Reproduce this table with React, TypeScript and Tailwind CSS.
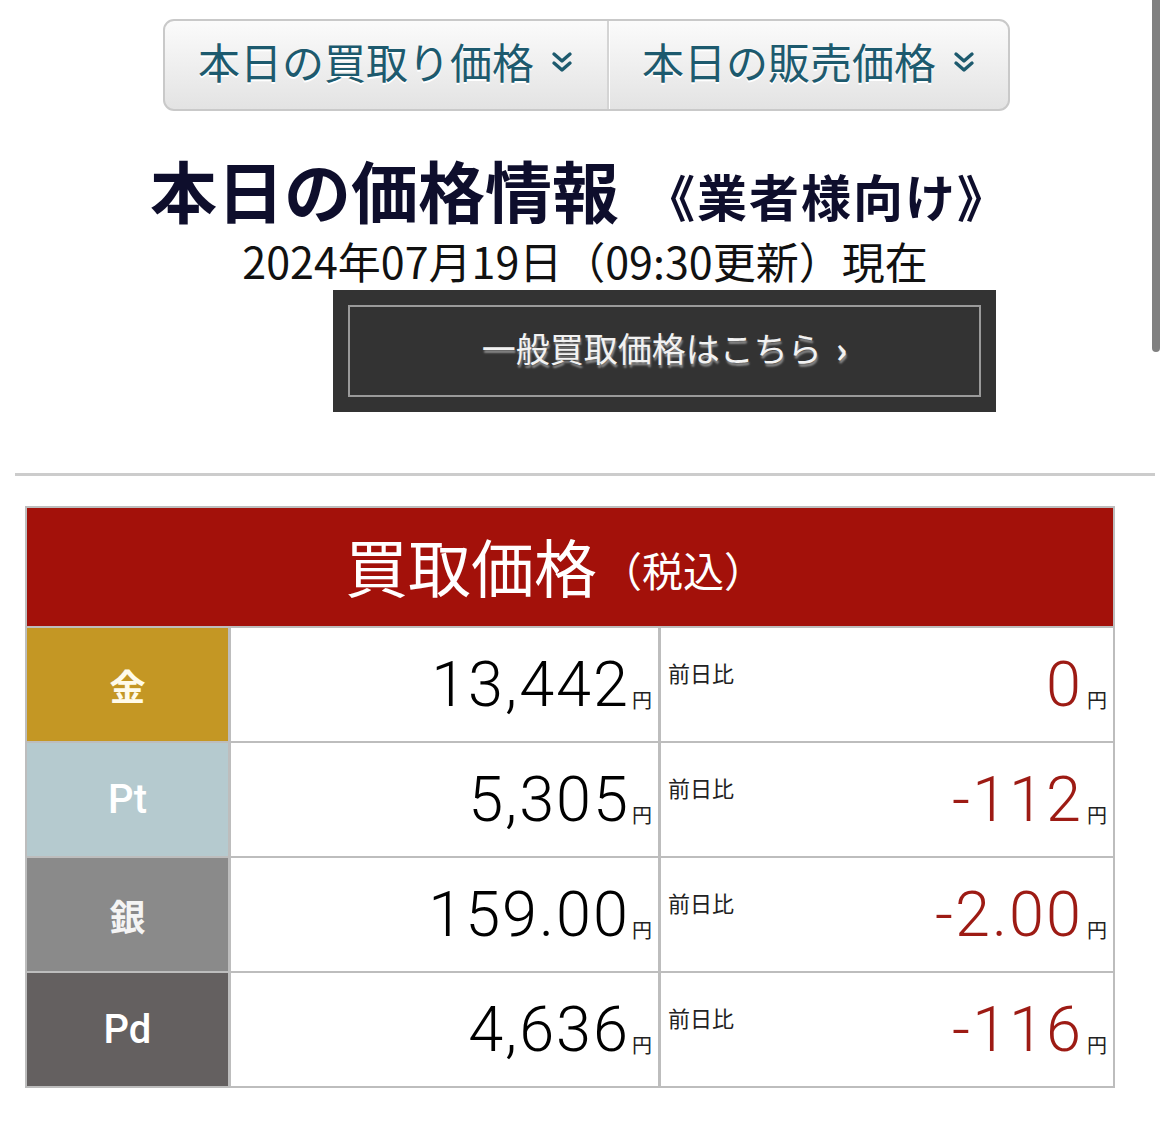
import React from "react";

function DoubleChevron() {
  return (
    <svg width="24" height="24" viewBox="0 0 24 24" className="ml-[16px] mt-[2px]">
      <path d="M4 4 L12 11 L20 4" fill="none" stroke="#1d5a6e" strokeWidth="3.4" strokeLinecap="round" strokeLinejoin="round" />
      <path d="M4 13 L12 20 L20 13" fill="none" stroke="#1d5a6e" strokeWidth="3.4" strokeLinecap="round" strokeLinejoin="round" />
    </svg>
  );
}

type Row = { label: string; bg: string; labelCls: string; value: string; change: string };

const rows: Row[] = [
  { label: "金", bg: "bg-[#c49724]", labelCls: "text-[36px] font-bold text-[#fffbea]", value: "13,442", change: "0" },
  { label: "Pt", bg: "bg-[#b5cacf]", labelCls: "text-[40px] font-['Roboto',sans-serif] font-medium text-white", value: "5,305", change: "-112" },
  { label: "銀", bg: "bg-[#8a8a8a]", labelCls: "text-[36px] font-bold text-[#f4f4f4]", value: "159.00", change: "-2.00" },
  { label: "Pd", bg: "bg-[#646060]", labelCls: "text-[40px] font-['Roboto',sans-serif] font-medium text-white", value: "4,636", change: "-116" },
];

export default function App() {
  return (
    <div className="relative w-[1170px] h-[1141px] bg-white overflow-hidden font-['Noto_Sans_CJK_JP','Noto_Sans',sans-serif]">
      {/* tabs */}
      <div className="pt-[19px]">
        <div className="ml-[163px] w-[847px] h-[92px] rounded-[11px] border-2 border-[#c9c9c9] bg-gradient-to-b from-[#fbfbfb] to-[#e3e3e3] flex overflow-hidden">
          <div className="w-[442px] pb-[8px] flex items-center justify-center text-[42px] leading-none text-[#1d5a6e] [text-shadow:0_2px_0_#ffffff]">
            <span>本日の買取り価格</span>
            <DoubleChevron />
          </div>
          <div className="w-[3px] bg-[#d4d4d4] border-r border-white" />
          <div className="flex-1 pb-[8px] flex items-center justify-center text-[42px] leading-none text-[#1d5a6e] [text-shadow:0_2px_0_#ffffff]">
            <span>本日の販売価格</span>
            <DoubleChevron />
          </div>
        </div>
      </div>

      {/* title */}
      <div className="mt-[44px] ml-[150px] flex items-end text-[#0e0e2c] font-bold leading-none">
        <span className="text-[67px]">本日の価格情報</span>
        <span className="ml-[26px] text-[50px] tracking-[2px] mb-[2px]">《業者様向け》</span>
      </div>

      {/* date */}
      <div className="mt-[17px] text-center text-[43px] leading-none text-[#111]">
        2024年07月19日（09:30更新）現在
      </div>

      {/* dark button */}
      <div className="mt-[8px] ml-[333px] w-[663px] h-[122px] bg-[#333333] p-[15px]">
        <div className="w-full h-full pb-[8px] border-2 border-[#9a9a9a] flex items-center justify-center text-[34px] text-[#f2f2f2] [text-shadow:1px_3px_2px_#8a8a8a]">
          一般買取価格はこちら<span className="ml-[14px] text-[36px] font-bold">›</span>
        </div>
      </div>

      {/* divider */}
      <div className="mt-[61px] ml-[15px] w-[1140px] h-[3px] bg-[#cccccc]" />

      {/* table */}
      <div className="mt-[30px] ml-[25px] w-[1090px] bg-[#bdbdbd] p-[2px] flex flex-col gap-[2px]">
        <div className="h-[118px] bg-[#a3110a] pb-[6px] flex items-center justify-center text-white pr-[30px]">
          <span className="text-[63px] leading-none">買取価格</span>
          <span className="ml-[4px] mt-[10px] text-[41px] leading-none">（税込）</span>
        </div>
        {rows.map((r) => (
          <div key={r.label} className="h-[113px] flex gap-[3px]">
            <div className={`w-[201px] flex items-center justify-center ${r.bg}`}>
              <span className={`leading-none ${r.labelCls}`}>{r.label}</span>
            </div>
            <div className="w-[427px] bg-white flex items-center justify-end pr-[6px]">
              <span className="font-['Roboto',sans-serif] font-light text-[63px] leading-none tracking-[2px] text-black">{r.value}</span>
              <span className="mt-[30px] ml-[2px] text-[20px] leading-none text-[#222]">円</span>
            </div>
            <div className="flex-1 bg-white flex items-center pr-[6px]">
              <span className="self-start mt-[33px] ml-[7px] text-[22px] leading-none text-[#222]">前日比</span>
              <div className="flex-1 flex items-center justify-end">
                <span className="font-['Roboto',sans-serif] font-light text-[63px] leading-none tracking-[2px] text-[#9d1b14]">{r.change}</span>
                <span className="mt-[30px] ml-[4px] text-[20px] leading-none text-[#222]">円</span>
              </div>
            </div>
          </div>
        ))}
      </div>

      {/* scroll indicator */}
      <div className="absolute right-[10px] top-0 w-[8px] h-[352px] rounded-b-full bg-[#808080]" />
    </div>
  );
}
